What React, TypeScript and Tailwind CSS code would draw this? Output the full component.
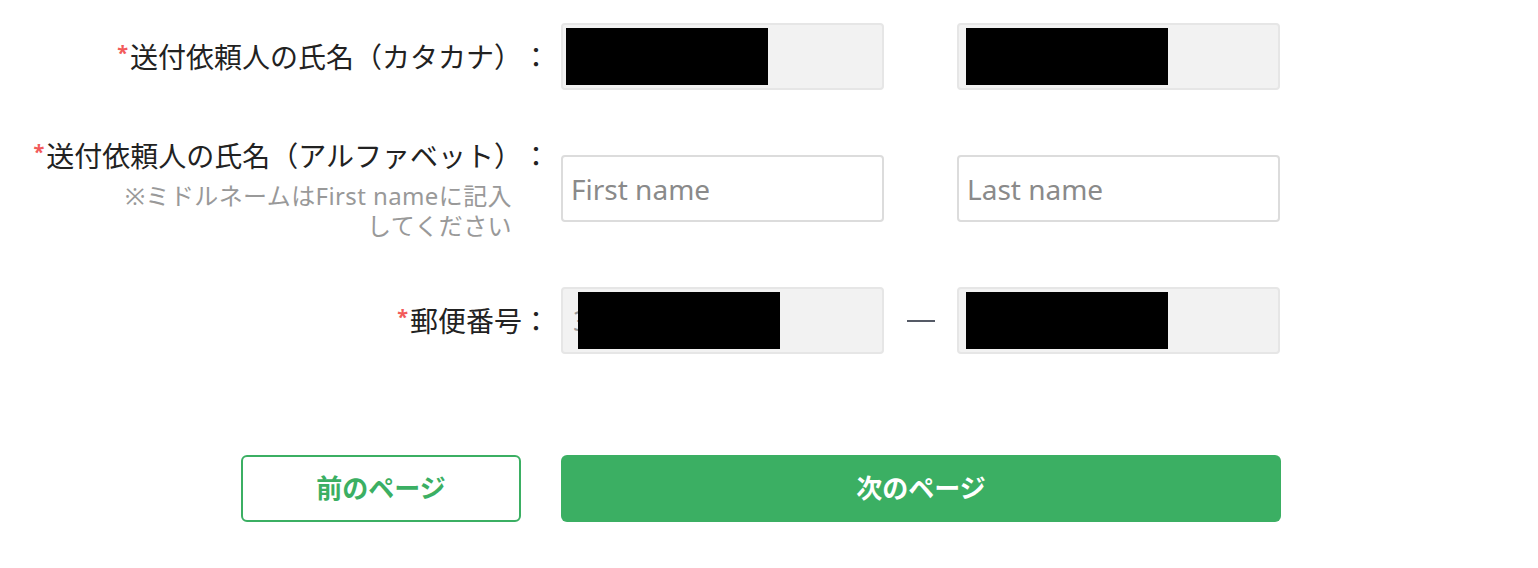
import React from "react";

const font = {
  fontFamily: '"Noto Sans", "Noto Sans CJK JP", sans-serif',
};

function Label({ text }: { text: string }) {
  return (
    <div className="h-[40px] overflow-visible whitespace-nowrap text-[28px] leading-[40px] text-[#222]">
      <span className="relative -top-[8px] mr-[2px] text-[20px] font-bold text-[#f25a5a]">*</span>
      {text}
      <span className="inline-block h-[40px] w-[28px] text-center align-top">：</span>
    </div>
  );
}

function LockedField({
  value,
  boxLeft,
}: {
  value?: string;
  boxLeft: string;
}) {
  return (
    <div className="relative h-[67px] w-[323px] rounded-[4px] border-2 border-[#e6e6e6] bg-[#f2f2f2]">
      <span className="block px-[10px] text-[28px] leading-[63px] text-[#999]">
        {value}
      </span>
      <div className={`absolute top-[3px] h-[57px] w-[202px] bg-black ${boxLeft}`} />
    </div>
  );
}

function TextField({ placeholder }: { placeholder: string }) {
  return (
    <input
      placeholder={placeholder}
      className="h-[67px] w-[323px] rounded-[4px] border-2 border-[#dcdcdc] bg-white px-[8px] text-[28px] text-[#333] outline-none placeholder:text-[#8a8a8a]"
    />
  );
}

export default function App() {
  return (
    <div className="min-h-[568px] w-[1538px] bg-white pt-[23px]" style={font}>
      <div className="flex flex-col gap-[46px]">
        <div className="flex h-[67px] items-center">
          <div className="mr-[11px] flex w-[550px] justify-end">
            <Label text="送付依頼人の氏名（カタカナ）" />
          </div>
          <LockedField boxLeft="left-[3px]" />
          <div className="w-[73px]" />
          <LockedField boxLeft="left-[7px]" />
        </div>

        <div className="flex h-[105px] items-center">
          <div className="mr-[11px] flex h-[105px] w-[550px] flex-col items-end">
            <Label text="送付依頼人の氏名（アルファベット）" />
            <p className="mt-[5px] mr-[38px] h-[60px] w-[410px] overflow-visible text-right text-[24px] leading-[30px] tracking-[0.4px] text-[#999]">
              ※ミドルネームはFirst nameに記入してください
            </p>
          </div>
          <TextField placeholder="First name" />
          <div className="w-[73px]" />
          <TextField placeholder="Last name" />
        </div>

        <div className="flex h-[67px] items-center">
          <div className="mr-[11px] flex w-[550px] justify-end">
            <Label text="郵便番号" />
          </div>
          <LockedField value="3" boxLeft="left-[15px]" />
          <div className="flex w-[73px] justify-center">
            <span className="block h-[2px] w-[28px] bg-[#555a66]" />
          </div>
          <LockedField boxLeft="left-[7px]" />
        </div>
      </div>

      <div className="mt-[101px] flex">
        <div className="flex w-[561px] justify-end pr-[40px]">
          <button className="h-[67px] w-[280px] rounded-[6px] border-2 border-[#3baf63] bg-white text-[26px] font-bold text-[#3baf63]">
            前のページ
          </button>
        </div>
        <button className="h-[67px] w-[720px] rounded-[6px] bg-[#3baf63] text-[26px] font-bold text-white">
          次のページ
        </button>
      </div>
    </div>
  );
}
